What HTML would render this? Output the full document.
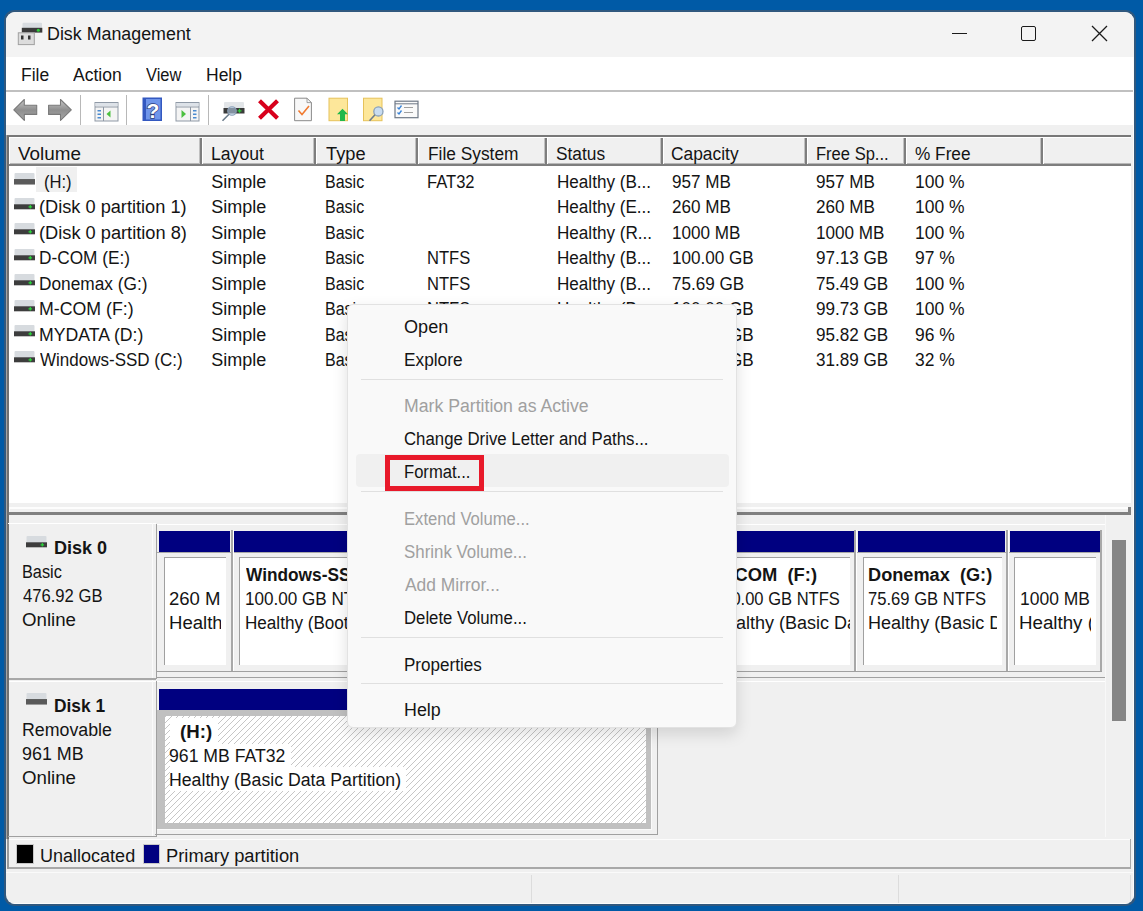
<!DOCTYPE html>
<html><head><meta charset="utf-8"><title>Disk Management</title>
<style>
html,body{margin:0;padding:0;width:1143px;height:911px;overflow:hidden;background:#005aa6;}
body{position:relative;font-family:"Liberation Sans",sans-serif;}
.r{position:absolute;}
.t{position:absolute;white-space:pre;transform-origin:0 0;}
#win{position:absolute;left:0;top:0;width:1143px;height:911px;clip-path:inset(12px 9px 7px 6px round 9px);}
#frame{position:absolute;left:4px;top:10px;width:1132px;height:896px;border-radius:10px;background:#30587e;}
</style></head><body>
<div id="frame"></div>
<div id="win">
<div class="r" style="left:0px;top:0px;width:1143px;height:911px;background:#f0f0f0;"></div>
<div class="r" style="left:0px;top:0px;width:1143px;height:57px;background:#f3f3f3;"></div>
<svg class="r" style="left:17px;top:21px" width="26" height="26" viewBox="0 0 26 26">
<rect x="5.5" y="1.8" width="19.5" height="5.5" rx="1" fill="#d8dce0"/>
<rect x="4.8" y="6.8" width="20.5" height="4.8" fill="#3a3a3a"/>
<circle cx="21.3" cy="9.2" r="1.5" fill="#2fcf3a"/>
<rect x="1.3" y="11.8" width="16" height="11.8" fill="#dcdcdc" stroke="#a0a0a0" stroke-width="1"/>
<rect x="4" y="14.5" width="2.5" height="4" fill="#333"/>
<rect x="11" y="14.5" width="2.5" height="4" fill="#333"/>
</svg>
<div class="t" style="left:47.21px;top:25.26px;font-size:18px;line-height:18px;color:#141414;transform:scaleX(0.9910);">Disk Management</div><div class="r" style="left:952px;top:33px;width:15px;height:1px;background:#1a1a1a;"></div>
<div class="r" style="left:1021px;top:26px;width:15px;height:15px;border:1.3px solid #1a1a1a;border-radius:2px;box-sizing:border-box;"></div>
<svg class="r" style="left:1091px;top:25px" width="17" height="17" viewBox="0 0 17 17"><path d="M1 1L16 16M16 1L1 16" stroke="#1a1a1a" stroke-width="1.3"/></svg>
<div class="r" style="left:0px;top:57px;width:1143px;height:33px;background:#fff;"></div>
<div class="r" style="left:0px;top:90px;width:1143px;height:2px;background:#c0c0c0;"></div>
<div class="t" style="left:21.03px;top:66.16px;font-size:18px;line-height:18px;color:#141414;transform:scaleX(0.9704);">File</div><div class="t" style="left:72.80px;top:66.16px;font-size:18px;line-height:18px;color:#141414;transform:scaleX(0.9735);">Action</div><div class="t" style="left:146.30px;top:66.16px;font-size:18px;line-height:18px;color:#141414;transform:scaleX(0.9154);">View</div><div class="t" style="left:205.83px;top:66.16px;font-size:18px;line-height:18px;color:#141414;transform:scaleX(0.9714);">Help</div><div class="r" style="left:0px;top:92px;width:1143px;height:33px;background:#fff;"></div>
<div class="r" style="left:79.5px;top:95px;width:1px;height:30px;background:#b8b8b8;"></div>
<div class="r" style="left:126px;top:95px;width:1px;height:30px;background:#b8b8b8;"></div>
<div class="r" style="left:207.5px;top:95px;width:1px;height:30px;background:#b8b8b8;"></div>
<svg class="r" style="left:0px;top:92px" width="430" height="33" viewBox="0 92 430 33">
<defs>
<linearGradient id="ag" x1="0" y1="0" x2="0" y2="1"><stop offset="0" stop-color="#c8c8c8"/><stop offset="0.5" stop-color="#8e8e8e"/><stop offset="1" stop-color="#a8a8a8"/></linearGradient>
</defs>
<path d="M13.8 109.8 L24.3 99.5 L24.3 105.2 L36.7 105.2 L36.7 114.4 L24.3 114.4 L24.3 120.4 Z" fill="url(#ag)" stroke="#7a7a7a" stroke-width="1.1" stroke-linejoin="round"/>
<path d="M71.3 109.8 L60.5 99.5 L60.5 105.2 L48.6 105.2 L48.6 114.4 L60.5 114.4 L60.5 120.4 Z" fill="url(#ag)" stroke="#7a7a7a" stroke-width="1.1" stroke-linejoin="round"/>
<!-- console tree -->
<rect x="95" y="102.5" width="23" height="18.5" fill="#f4f4f4" stroke="#8f99a6" stroke-width="1"/>
<rect x="95.5" y="103" width="22" height="3" fill="#dde2e8"/>
<line x1="95" y1="107" x2="118" y2="107" stroke="#8f99a6" stroke-width="1"/>
<line x1="103.5" y1="107" x2="103.5" y2="121" stroke="#8f99a6" stroke-width="1"/>
<rect x="97.5" y="110" width="3.5" height="1.5" fill="#4a8ad0"/>
<rect x="97.5" y="113.5" width="3.5" height="1.5" fill="#4a8ad0"/>
<rect x="97.5" y="117" width="3.5" height="1.5" fill="#4a8ad0"/>
<path d="M106.5 114 L110.5 110.5 L110.5 117.5 Z" fill="#4cc040"/>
<!-- help -->
<rect x="142.5" y="97.5" width="19.5" height="23.5" fill="#3358c0"/>
<rect x="146" y="99" width="14.5" height="20.5" fill="#6f95ea"/>
<text x="152.8" y="118" font-family="Liberation Sans" font-weight="bold" font-size="21" fill="#fff" stroke="#2a3a7a" stroke-width="1.4" paint-order="stroke" text-anchor="middle">?</text>
<!-- action pane -->
<rect x="176" y="102.5" width="23" height="18.5" fill="#f4f4f4" stroke="#8f99a6" stroke-width="1"/>
<rect x="176.5" y="103" width="22" height="3" fill="#dde2e8"/>
<line x1="176" y1="107" x2="199" y2="107" stroke="#8f99a6" stroke-width="1"/>
<line x1="190.5" y1="107" x2="190.5" y2="121" stroke="#8f99a6" stroke-width="1"/>
<rect x="193" y="110" width="3.5" height="1.5" fill="#4a8ad0"/>
<rect x="193" y="113.5" width="3.5" height="1.5" fill="#4a8ad0"/>
<rect x="193" y="117" width="3.5" height="1.5" fill="#4a8ad0"/>
<path d="M186 114 L181.5 110 L181.5 118 Z" fill="#4cc040"/>
<!-- drive + magnifier -->
<rect x="224" y="102" width="20" height="6.5" rx="1" fill="#e2e5e8"/>
<rect x="223.5" y="108" width="21" height="5.5" fill="#3a3a3a"/>
<path d="M237.5 110.8h4M239.5 108.8v4" stroke="#2fd03a" stroke-width="1.3"/>
<circle cx="232" cy="111" r="4.3" fill="rgba(180,205,230,0.6)" stroke="#8aa0b8" stroke-width="1.1"/>
<line x1="229" y1="114.2" x2="222.5" y2="120.8" stroke="#6a7a8a" stroke-width="1.6"/>
<!-- red X -->
<path d="M259.5 100.8 L277.5 118.2 M277.5 100.8 L259.5 118.2" stroke="#d8001c" stroke-width="4.2" stroke-linecap="butt"/>
<!-- doc check -->
<path d="M294.6 98.2 L307 98.2 L311.4 102.6 L311.4 120.7 L294.6 120.7 Z" fill="#f8f8f8" stroke="#8a8a8a" stroke-width="1"/>
<path d="M307 98.2 L307 102.6 L311.4 102.6" fill="none" stroke="#8a8a8a" stroke-width="0.8"/>
<path d="M298.5 110.5 L302 114.5 L309 106" fill="none" stroke="#f07a30" stroke-width="1.6"/>
<!-- yellow doc up -->
<rect x="329" y="98.2" width="18.5" height="22.5" fill="#fde79a" stroke="#e6c25a" stroke-width="1"/>
<path d="M342.5 108.8 L348 114.3 L345 114.3 L345 121 L340 121 L340 114.3 L337 114.3 Z" fill="#22b84a"/>
<!-- yellow doc magnifier -->
<rect x="363.5" y="98.2" width="18.5" height="22.5" fill="#fde79a" stroke="#e6c25a" stroke-width="1"/>
<circle cx="378.4" cy="111.4" r="4.6" fill="#c8dcf0" stroke="#8aa0b8" stroke-width="1.3"/>
<line x1="375" y1="114.8" x2="369.5" y2="120.8" stroke="#6c7c8c" stroke-width="1.6"/>
<!-- checklist -->
<rect x="395" y="101.2" width="23" height="16.5" fill="#fafafa" stroke="#6e7886" stroke-width="1.2"/>
<line x1="395" y1="103.8" x2="418" y2="103.8" stroke="#6e7886" stroke-width="1"/>
<path d="M397.5 107.5 L399 109 L401.5 105.5 M397.5 112.5 L399 114 L401.5 110.5" fill="none" stroke="#3a84d8" stroke-width="1.3"/>
<line x1="404" y1="107.5" x2="413" y2="107.5" stroke="#a0a0a0" stroke-width="1"/>
<line x1="404" y1="112.5" x2="413" y2="112.5" stroke="#a0a0a0" stroke-width="1"/>
</svg>
<div class="r" style="left:6px;top:135px;width:1125px;height:2px;background:#787878;"></div>
<div class="r" style="left:6px;top:135px;width:1px;height:380px;background:#a4a4a4;"></div>
<div class="r" style="left:7px;top:136px;width:2px;height:379px;background:#707070;"></div>
<div class="r" style="left:9px;top:137px;width:1122px;height:366px;background:#fff;"></div>
<div class="r" style="left:9px;top:137px;width:1122px;height:29px;background:#f0f0f0;"></div>
<div class="r" style="left:9px;top:137px;width:1122px;height:1px;background:#fff;"></div>
<div class="r" style="left:9px;top:163px;width:1122px;height:1px;background:#b8b8b8;"></div>
<div class="r" style="left:9px;top:164px;width:1122px;height:2px;background:#7e7e7e;"></div>
<div class="r" style="left:9px;top:137px;width:1px;height:27px;background:#fff;"></div>
<div class="r" style="left:199px;top:138px;width:1px;height:26px;background:#c0c0c0;"></div>
<div class="r" style="left:200px;top:138px;width:2px;height:26px;background:#7e7e7e;"></div>
<div class="r" style="left:202px;top:138px;width:1px;height:26px;background:#fff;"></div>
<div class="r" style="left:313px;top:138px;width:1px;height:26px;background:#c0c0c0;"></div>
<div class="r" style="left:314px;top:138px;width:2px;height:26px;background:#7e7e7e;"></div>
<div class="r" style="left:316px;top:138px;width:1px;height:26px;background:#fff;"></div>
<div class="r" style="left:415px;top:138px;width:1px;height:26px;background:#c0c0c0;"></div>
<div class="r" style="left:416px;top:138px;width:2px;height:26px;background:#7e7e7e;"></div>
<div class="r" style="left:418px;top:138px;width:1px;height:26px;background:#fff;"></div>
<div class="r" style="left:544px;top:138px;width:1px;height:26px;background:#c0c0c0;"></div>
<div class="r" style="left:545px;top:138px;width:2px;height:26px;background:#7e7e7e;"></div>
<div class="r" style="left:547px;top:138px;width:1px;height:26px;background:#fff;"></div>
<div class="r" style="left:660px;top:138px;width:1px;height:26px;background:#c0c0c0;"></div>
<div class="r" style="left:661px;top:138px;width:2px;height:26px;background:#7e7e7e;"></div>
<div class="r" style="left:663px;top:138px;width:1px;height:26px;background:#fff;"></div>
<div class="r" style="left:804px;top:138px;width:1px;height:26px;background:#c0c0c0;"></div>
<div class="r" style="left:805px;top:138px;width:2px;height:26px;background:#7e7e7e;"></div>
<div class="r" style="left:807px;top:138px;width:1px;height:26px;background:#fff;"></div>
<div class="r" style="left:903px;top:138px;width:1px;height:26px;background:#c0c0c0;"></div>
<div class="r" style="left:904px;top:138px;width:2px;height:26px;background:#7e7e7e;"></div>
<div class="r" style="left:906px;top:138px;width:1px;height:26px;background:#fff;"></div>
<div class="r" style="left:1040px;top:138px;width:1px;height:26px;background:#c0c0c0;"></div>
<div class="r" style="left:1041px;top:138px;width:2px;height:26px;background:#7e7e7e;"></div>
<div class="r" style="left:1043px;top:138px;width:1px;height:26px;background:#fff;"></div>
<div class="t" style="left:18.10px;top:145.16px;font-size:18px;line-height:18px;color:#141414;transform:scaleX(1.0475);">Volume</div><div class="t" style="left:211.12px;top:145.16px;font-size:18px;line-height:18px;color:#141414;transform:scaleX(0.9792);">Layout</div><div class="t" style="left:325.80px;top:145.16px;font-size:18px;line-height:18px;color:#141414;transform:scaleX(1.0132);">Type</div><div class="t" style="left:427.54px;top:145.16px;font-size:18px;line-height:18px;color:#141414;transform:scaleX(0.9620);">File System</div><div class="t" style="left:555.74px;top:145.16px;font-size:18px;line-height:18px;color:#141414;transform:scaleX(0.9620);">Status</div><div class="t" style="left:671.23px;top:145.16px;font-size:18px;line-height:18px;color:#141414;transform:scaleX(0.9652);">Capacity</div><div class="t" style="left:815.58px;top:145.16px;font-size:18px;line-height:18px;color:#141414;transform:scaleX(0.9195);">Free Sp...</div><div class="t" style="left:915.04px;top:145.16px;font-size:18px;line-height:18px;color:#141414;transform:scaleX(0.9571);">% Free</div><div class="r" style="left:36px;top:167px;width:41px;height:25px;background:#f0f0f0;"></div>
<svg class="r" style="left:13.5px;top:172.5px" width="21" height="12" viewBox="0 0 21 12"><rect x="0.5" y="0" width="20" height="7" rx="1" fill="#d7dbdf"/><rect x="0" y="6.3" width="21" height="5" fill="#3d3d3d"/><rect x="0" y="6.3" width="21" height="5" fill="#5a5a5a"/></svg>
<div class="t" style="left:44.08px;top:172.96px;font-size:18px;line-height:18px;color:#141414;transform:scaleX(0.9214);">(H:)</div><div class="t" style="left:211.20px;top:172.96px;font-size:18px;line-height:18px;color:#141414;transform:scaleX(1.0000);">Simple</div><div class="t" style="left:325.31px;top:172.96px;font-size:18px;line-height:18px;color:#141414;transform:scaleX(0.8900);">Basic</div><div class="t" style="left:426.88px;top:172.96px;font-size:18px;line-height:18px;color:#141414;transform:scaleX(0.9200);">FAT32</div><div class="t" style="left:556.55px;top:172.96px;font-size:18px;line-height:18px;color:#141414;transform:scaleX(0.9500);">Healthy (B...</div><div class="t" style="left:671.55px;top:172.96px;font-size:18px;line-height:18px;color:#141414;transform:scaleX(0.9500);">957 MB</div><div class="t" style="left:815.55px;top:172.96px;font-size:18px;line-height:18px;color:#141414;transform:scaleX(0.9500);">957 MB</div><div class="t" style="left:914.53px;top:172.96px;font-size:18px;line-height:18px;color:#141414;transform:scaleX(0.9700);">100 %</div><svg class="r" style="left:13.5px;top:197.94px" width="21" height="12" viewBox="0 0 21 12"><rect x="0.5" y="0" width="20" height="7" rx="1" fill="#d7dbdf"/><rect x="0" y="6.3" width="21" height="5" fill="#3d3d3d"/><path d="M14.5 8.8h3.6M16.3 7v3.6" stroke="#2ad43a" stroke-width="1.2"/></svg>
<div class="t" style="left:38.69px;top:198.40px;font-size:18px;line-height:18px;color:#141414;transform:scaleX(1.0104);">(Disk 0 partition 1)</div><div class="t" style="left:211.20px;top:198.40px;font-size:18px;line-height:18px;color:#141414;transform:scaleX(1.0000);">Simple</div><div class="t" style="left:325.31px;top:198.40px;font-size:18px;line-height:18px;color:#141414;transform:scaleX(0.8900);">Basic</div><div class="t" style="left:556.55px;top:198.40px;font-size:18px;line-height:18px;color:#141414;transform:scaleX(0.9500);">Healthy (E...</div><div class="t" style="left:671.55px;top:198.40px;font-size:18px;line-height:18px;color:#141414;transform:scaleX(0.9500);">260 MB</div><div class="t" style="left:815.55px;top:198.40px;font-size:18px;line-height:18px;color:#141414;transform:scaleX(0.9500);">260 MB</div><div class="t" style="left:914.53px;top:198.40px;font-size:18px;line-height:18px;color:#141414;transform:scaleX(0.9700);">100 %</div><svg class="r" style="left:13.5px;top:223.38px" width="21" height="12" viewBox="0 0 21 12"><rect x="0.5" y="0" width="20" height="7" rx="1" fill="#d7dbdf"/><rect x="0" y="6.3" width="21" height="5" fill="#3d3d3d"/><path d="M14.5 8.8h3.6M16.3 7v3.6" stroke="#2ad43a" stroke-width="1.2"/></svg>
<div class="t" style="left:38.69px;top:223.84px;font-size:18px;line-height:18px;color:#141414;transform:scaleX(1.0125);">(Disk 0 partition 8)</div><div class="t" style="left:211.20px;top:223.84px;font-size:18px;line-height:18px;color:#141414;transform:scaleX(1.0000);">Simple</div><div class="t" style="left:325.31px;top:223.84px;font-size:18px;line-height:18px;color:#141414;transform:scaleX(0.8900);">Basic</div><div class="t" style="left:556.55px;top:223.84px;font-size:18px;line-height:18px;color:#141414;transform:scaleX(0.9500);">Healthy (R...</div><div class="t" style="left:671.55px;top:223.84px;font-size:18px;line-height:18px;color:#141414;transform:scaleX(0.9500);">1000 MB</div><div class="t" style="left:815.55px;top:223.84px;font-size:18px;line-height:18px;color:#141414;transform:scaleX(0.9500);">1000 MB</div><div class="t" style="left:914.53px;top:223.84px;font-size:18px;line-height:18px;color:#141414;transform:scaleX(0.9700);">100 %</div><svg class="r" style="left:13.5px;top:248.82px" width="21" height="12" viewBox="0 0 21 12"><rect x="0.5" y="0" width="20" height="7" rx="1" fill="#d7dbdf"/><rect x="0" y="6.3" width="21" height="5" fill="#3d3d3d"/><path d="M14.5 8.8h3.6M16.3 7v3.6" stroke="#2ad43a" stroke-width="1.2"/></svg>
<div class="t" style="left:38.74px;top:249.28px;font-size:18px;line-height:18px;color:#141414;transform:scaleX(0.9581);">D-COM (E:)</div><div class="t" style="left:211.20px;top:249.28px;font-size:18px;line-height:18px;color:#141414;transform:scaleX(1.0000);">Simple</div><div class="t" style="left:325.31px;top:249.28px;font-size:18px;line-height:18px;color:#141414;transform:scaleX(0.8900);">Basic</div><div class="t" style="left:426.88px;top:249.28px;font-size:18px;line-height:18px;color:#141414;transform:scaleX(0.9200);">NTFS</div><div class="t" style="left:556.55px;top:249.28px;font-size:18px;line-height:18px;color:#141414;transform:scaleX(0.9500);">Healthy (B...</div><div class="t" style="left:671.55px;top:249.28px;font-size:18px;line-height:18px;color:#141414;transform:scaleX(0.9500);">100.00 GB</div><div class="t" style="left:815.55px;top:249.28px;font-size:18px;line-height:18px;color:#141414;transform:scaleX(0.9500);">97.13 GB</div><div class="t" style="left:914.53px;top:249.28px;font-size:18px;line-height:18px;color:#141414;transform:scaleX(0.9700);">97 %</div><svg class="r" style="left:13.5px;top:274.26px" width="21" height="12" viewBox="0 0 21 12"><rect x="0.5" y="0" width="20" height="7" rx="1" fill="#d7dbdf"/><rect x="0" y="6.3" width="21" height="5" fill="#3d3d3d"/><path d="M14.5 8.8h3.6M16.3 7v3.6" stroke="#2ad43a" stroke-width="1.2"/></svg>
<div class="t" style="left:38.74px;top:274.72px;font-size:18px;line-height:18px;color:#141414;transform:scaleX(0.9604);">Donemax (G:)</div><div class="t" style="left:211.20px;top:274.72px;font-size:18px;line-height:18px;color:#141414;transform:scaleX(1.0000);">Simple</div><div class="t" style="left:325.31px;top:274.72px;font-size:18px;line-height:18px;color:#141414;transform:scaleX(0.8900);">Basic</div><div class="t" style="left:426.88px;top:274.72px;font-size:18px;line-height:18px;color:#141414;transform:scaleX(0.9200);">NTFS</div><div class="t" style="left:556.55px;top:274.72px;font-size:18px;line-height:18px;color:#141414;transform:scaleX(0.9500);">Healthy (B...</div><div class="t" style="left:671.55px;top:274.72px;font-size:18px;line-height:18px;color:#141414;transform:scaleX(0.9500);">75.69 GB</div><div class="t" style="left:815.55px;top:274.72px;font-size:18px;line-height:18px;color:#141414;transform:scaleX(0.9500);">75.49 GB</div><div class="t" style="left:914.53px;top:274.72px;font-size:18px;line-height:18px;color:#141414;transform:scaleX(0.9700);">100 %</div><svg class="r" style="left:13.5px;top:299.7px" width="21" height="12" viewBox="0 0 21 12"><rect x="0.5" y="0" width="20" height="7" rx="1" fill="#d7dbdf"/><rect x="0" y="6.3" width="21" height="5" fill="#3d3d3d"/><path d="M14.5 8.8h3.6M16.3 7v3.6" stroke="#2ad43a" stroke-width="1.2"/></svg>
<div class="t" style="left:38.71px;top:300.16px;font-size:18px;line-height:18px;color:#141414;transform:scaleX(0.9851);">M-COM (F:)</div><div class="t" style="left:211.20px;top:300.16px;font-size:18px;line-height:18px;color:#141414;transform:scaleX(1.0000);">Simple</div><div class="t" style="left:325.31px;top:300.16px;font-size:18px;line-height:18px;color:#141414;transform:scaleX(0.8900);">Basic</div><div class="t" style="left:426.88px;top:300.16px;font-size:18px;line-height:18px;color:#141414;transform:scaleX(0.9200);">NTFS</div><div class="t" style="left:556.55px;top:300.16px;font-size:18px;line-height:18px;color:#141414;transform:scaleX(0.9500);">Healthy (B...</div><div class="t" style="left:671.55px;top:300.16px;font-size:18px;line-height:18px;color:#141414;transform:scaleX(0.9500);">100.00 GB</div><div class="t" style="left:815.55px;top:300.16px;font-size:18px;line-height:18px;color:#141414;transform:scaleX(0.9500);">99.73 GB</div><div class="t" style="left:914.53px;top:300.16px;font-size:18px;line-height:18px;color:#141414;transform:scaleX(0.9700);">100 %</div><svg class="r" style="left:13.5px;top:325.14px" width="21" height="12" viewBox="0 0 21 12"><rect x="0.5" y="0" width="20" height="7" rx="1" fill="#d7dbdf"/><rect x="0" y="6.3" width="21" height="5" fill="#3d3d3d"/><path d="M14.5 8.8h3.6M16.3 7v3.6" stroke="#2ad43a" stroke-width="1.2"/></svg>
<div class="t" style="left:38.72px;top:325.60px;font-size:18px;line-height:18px;color:#141414;transform:scaleX(0.9817);">MYDATA (D:)</div><div class="t" style="left:211.20px;top:325.60px;font-size:18px;line-height:18px;color:#141414;transform:scaleX(1.0000);">Simple</div><div class="t" style="left:325.31px;top:325.60px;font-size:18px;line-height:18px;color:#141414;transform:scaleX(0.8900);">Basic</div><div class="t" style="left:426.88px;top:325.60px;font-size:18px;line-height:18px;color:#141414;transform:scaleX(0.9200);">NTFS</div><div class="t" style="left:556.55px;top:325.60px;font-size:18px;line-height:18px;color:#141414;transform:scaleX(0.9500);">Healthy (B...</div><div class="t" style="left:671.55px;top:325.60px;font-size:18px;line-height:18px;color:#141414;transform:scaleX(0.9500);">100.00 GB</div><div class="t" style="left:815.55px;top:325.60px;font-size:18px;line-height:18px;color:#141414;transform:scaleX(0.9500);">95.82 GB</div><div class="t" style="left:914.53px;top:325.60px;font-size:18px;line-height:18px;color:#141414;transform:scaleX(0.9700);">96 %</div><svg class="r" style="left:13.5px;top:350.58000000000004px" width="21" height="12" viewBox="0 0 21 12"><rect x="0.5" y="0" width="20" height="7" rx="1" fill="#d7dbdf"/><rect x="0" y="6.3" width="21" height="5" fill="#3d3d3d"/><path d="M14.5 8.8h3.6M16.3 7v3.6" stroke="#2ad43a" stroke-width="1.2"/></svg>
<div class="t" style="left:39.70px;top:351.04px;font-size:18px;line-height:18px;color:#141414;transform:scaleX(0.9447);">Windows-SSD (C:)</div><div class="t" style="left:211.20px;top:351.04px;font-size:18px;line-height:18px;color:#141414;transform:scaleX(1.0000);">Simple</div><div class="t" style="left:325.31px;top:351.04px;font-size:18px;line-height:18px;color:#141414;transform:scaleX(0.8900);">Basic</div><div class="t" style="left:426.88px;top:351.04px;font-size:18px;line-height:18px;color:#141414;transform:scaleX(0.9200);">NTFS</div><div class="t" style="left:556.55px;top:351.04px;font-size:18px;line-height:18px;color:#141414;transform:scaleX(0.9500);">Healthy (B...</div><div class="t" style="left:671.55px;top:351.04px;font-size:18px;line-height:18px;color:#141414;transform:scaleX(0.9500);">100.00 GB</div><div class="t" style="left:815.55px;top:351.04px;font-size:18px;line-height:18px;color:#141414;transform:scaleX(0.9500);">31.89 GB</div><div class="t" style="left:914.53px;top:351.04px;font-size:18px;line-height:18px;color:#141414;transform:scaleX(0.9700);">32 %</div><div class="r" style="left:9px;top:503px;width:1122px;height:4px;background:#f0f0f0;"></div>
<div class="r" style="left:9px;top:507px;width:1122px;height:2px;background:#fdfdfd;"></div>
<div class="r" style="left:9px;top:509px;width:1122px;height:3px;background:#f0f0f0;"></div>
<div class="r" style="left:9px;top:512px;width:1122px;height:3px;background:#808080;"></div>
<div class="r" style="left:9px;top:507px;width:1px;height:5px;background:#fdfdfd;"></div>
<div class="r" style="left:1128px;top:507px;width:3px;height:8px;background:#808080;"></div>
<div class="r" style="left:1131px;top:135px;width:3px;height:380px;background:#f0f0f0;"></div>
<div class="r" style="left:6px;top:515px;width:1px;height:324px;background:#a4a4a4;"></div>
<div class="r" style="left:7px;top:515px;width:2px;height:324px;background:#707070;"></div>
<div class="r" style="left:9px;top:515px;width:1096px;height:322px;background:#f0f0f0;"></div>
<div class="r" style="left:8px;top:523px;width:148px;height:1px;background:#fff;"></div>
<div class="r" style="left:152px;top:523px;width:1px;height:155px;background:#fafafa;"></div>
<div class="r" style="left:156px;top:524px;width:1px;height:155px;background:#a0a0a0;"></div>
<div class="r" style="left:9px;top:678px;width:147px;height:2px;background:#a8a8a8;"></div>
<svg class="r" style="left:25.7px;top:535.5px" width="21" height="12" viewBox="0 0 21 12"><rect x="0.5" y="0" width="20" height="7" rx="1" fill="#d7dbdf"/><rect x="0" y="6.3" width="21" height="5" fill="#3d3d3d"/><path d="M14.5 8.8h3.6M16.3 7v3.6" stroke="#2ad43a" stroke-width="1.2"/></svg>
<div class="t" style="left:53.90px;top:538.96px;font-size:18px;line-height:18px;color:#141414;font-weight:bold;transform:scaleX(1.0020);">Disk 0</div><div class="t" style="left:22.40px;top:563.16px;font-size:18px;line-height:18px;color:#141414;transform:scaleX(0.9047);">Basic</div><div class="t" style="left:23.30px;top:587.26px;font-size:18px;line-height:18px;color:#141414;transform:scaleX(0.9235);">476.92 GB</div><div class="t" style="left:22.26px;top:610.86px;font-size:18px;line-height:18px;color:#141414;transform:scaleX(1.0380);">Online</div><div class="r" style="left:157px;top:524px;width:948px;height:1px;background:#fff;"></div>
<div class="r" style="left:157px;top:677px;width:948px;height:1px;background:#a0a0a0;"></div>
<div class="r" style="left:157px;top:671px;width:945px;height:1px;background:#a0a0a0;"></div>
<div class="r" style="left:157px;top:552px;width:945px;height:1px;background:#a8a8a8;"></div>
<div class="r" style="left:159px;top:531px;width:70.5px;height:21px;background:#000080;"></div>
<div class="r" style="left:234px;top:531px;width:166px;height:21px;background:#000080;"></div>
<div class="r" style="left:700px;top:531px;width:153.5px;height:21px;background:#000080;"></div>
<div class="r" style="left:858px;top:531px;width:147px;height:21px;background:#000080;"></div>
<div class="r" style="left:1009.5px;top:531px;width:90.5px;height:21px;background:#000080;"></div>
<div class="r" style="left:230.5px;top:530px;width:2px;height:141px;background:#a8a8a8;"></div>
<div class="r" style="left:232.5px;top:530px;width:1px;height:141px;background:#fff;"></div>
<div class="r" style="left:854px;top:530px;width:2px;height:141px;background:#a8a8a8;"></div>
<div class="r" style="left:856px;top:530px;width:1px;height:141px;background:#fff;"></div>
<div class="r" style="left:1005.5px;top:530px;width:2px;height:141px;background:#a8a8a8;"></div>
<div class="r" style="left:1007.5px;top:530px;width:1px;height:141px;background:#fff;"></div>
<div class="r" style="left:1100px;top:530px;width:2px;height:141px;background:#a8a8a8;"></div>
<div class="r" style="left:164px;top:557px;width:61.5px;height:108px;background:#fff;border-left:1px solid #a0a0a0;border-top:1px solid #a0a0a0;box-sizing:border-box;"></div>
<div class="r" style="left:238.5px;top:557px;width:111.5px;height:108px;background:#fff;border-left:1px solid #a0a0a0;border-top:1px solid #a0a0a0;box-sizing:border-box;"></div>
<div class="r" style="left:700px;top:557px;width:149.5px;height:108px;background:#fff;border-left:1px solid #a0a0a0;border-top:1px solid #a0a0a0;box-sizing:border-box;"></div>
<div class="r" style="left:862.5px;top:557px;width:139.0px;height:108px;background:#fff;border-left:1px solid #a0a0a0;border-top:1px solid #a0a0a0;box-sizing:border-box;"></div>
<div class="r" style="left:1014px;top:557px;width:82px;height:108px;background:#fff;border-left:1px solid #a0a0a0;border-top:1px solid #a0a0a0;box-sizing:border-box;"></div>
<div class="r" style="left:165px;top:558px;width:56.30000000000001px;height:108px;overflow:hidden;"><div class="r" style="left:-165px;top:-558px;width:1143px;height:911px;"><div class="t" style="left:168.97px;top:590.16px;font-size:18px;line-height:18px;color:#141414;transform:scaleX(1.0300);">260 MB</div><div class="t" style="left:168.97px;top:613.76px;font-size:18px;line-height:18px;color:#141414;transform:scaleX(1.0300);">Healthy (EFI System Partition)</div></div></div>
<div class="r" style="left:239.5px;top:558px;width:110.5px;height:108px;overflow:hidden;"><div class="r" style="left:-239.5px;top:-558px;width:1143px;height:911px;"><div class="t" style="left:245.50px;top:566.26px;font-size:18px;line-height:18px;color:#141414;font-weight:bold;transform:scaleX(0.9600);">Windows-SSD  (C:)</div><div class="t" style="left:244.55px;top:590.16px;font-size:18px;line-height:18px;color:#141414;transform:scaleX(0.9500);">100.00 GB NTFS</div><div class="t" style="left:244.55px;top:613.76px;font-size:18px;line-height:18px;color:#141414;transform:scaleX(0.9500);">Healthy (Boot, Page File, Crash Dump, Basic Data Partition)</div></div></div>
<div class="r" style="left:736px;top:558px;width:113.5px;height:108px;overflow:hidden;"><div class="r" style="left:-736px;top:-558px;width:1143px;height:911px;"><div class="t" style="left:712.98px;top:566.26px;font-size:18px;line-height:18px;color:#141414;font-weight:bold;transform:scaleX(1.0200);">M-COM  (F:)</div><div class="t" style="left:713.08px;top:590.16px;font-size:18px;line-height:18px;color:#141414;transform:scaleX(0.9184);">100.00 GB NTFS</div><div class="t" style="left:713.00px;top:613.76px;font-size:18px;line-height:18px;color:#141414;transform:scaleX(1.0000);">Healthy (Basic Data Partition)</div></div></div>
<div class="r" style="left:863.5px;top:558px;width:133.5px;height:108px;overflow:hidden;"><div class="r" style="left:-863.5px;top:-558px;width:1143px;height:911px;"><div class="t" style="left:868.09px;top:566.26px;font-size:18px;line-height:18px;color:#141414;font-weight:bold;transform:scaleX(1.0099);">Donemax  (G:)</div><div class="t" style="left:868.18px;top:590.16px;font-size:18px;line-height:18px;color:#141414;transform:scaleX(0.9230);">75.69 GB NTFS</div><div class="t" style="left:868.10px;top:613.76px;font-size:18px;line-height:18px;color:#141414;transform:scaleX(1.0000);">Healthy (Basic Data Partition)</div></div></div>
<div class="r" style="left:1015px;top:558px;width:76px;height:108px;overflow:hidden;"><div class="r" style="left:-1015px;top:-558px;width:1143px;height:911px;"><div class="t" style="left:1019.53px;top:590.16px;font-size:18px;line-height:18px;color:#141414;transform:scaleX(0.9700);">1000 MB</div><div class="t" style="left:1019.46px;top:613.76px;font-size:18px;line-height:18px;color:#141414;transform:scaleX(1.0400);">Healthy (Recovery Partition)</div></div></div>
<div class="r" style="left:9px;top:681px;width:147px;height:1px;background:#fff;"></div>
<div class="r" style="left:152px;top:680px;width:1px;height:157px;background:#fafafa;"></div>
<div class="r" style="left:156px;top:681px;width:1px;height:156px;background:#a0a0a0;"></div>
<div class="r" style="left:8px;top:836px;width:148px;height:1px;background:#a0a0a0;"></div>
<svg class="r" style="left:25.7px;top:692.8px" width="21" height="12" viewBox="0 0 21 12"><rect x="0.5" y="0" width="20" height="7" rx="1" fill="#d7dbdf"/><rect x="0" y="6.3" width="21" height="5" fill="#3d3d3d"/><rect x="0" y="6.3" width="21" height="5" fill="#5a5a5a"/></svg>
<div class="t" style="left:54.04px;top:696.96px;font-size:18px;line-height:18px;color:#141414;font-weight:bold;transform:scaleX(0.9640);">Disk 1</div><div class="t" style="left:22.31px;top:720.86px;font-size:18px;line-height:18px;color:#141414;transform:scaleX(0.9876);">Removable</div><div class="t" style="left:22.30px;top:745.46px;font-size:18px;line-height:18px;color:#141414;transform:scaleX(0.9950);">961 MB</div><div class="t" style="left:22.26px;top:769.06px;font-size:18px;line-height:18px;color:#141414;transform:scaleX(1.0380);">Online</div><div class="r" style="left:157px;top:681px;width:948px;height:1px;background:#fff;"></div>
<div class="r" style="left:159px;top:689px;width:492px;height:21px;background:#000080;"></div>
<div class="r" style="left:155px;top:710px;width:503px;height:125px;border-right:1px solid #a0a0a0;border-bottom:1px solid #a0a0a0;box-sizing:border-box;"></div>
<div class="r" style="left:157px;top:710px;width:494px;height:119px;background:#c0c0c0;"></div>
<div class="r" style="left:157px;top:829px;width:495px;height:1px;background:#fafafa;"></div>
<div class="r" style="left:651px;top:710px;width:1px;height:120px;background:#fafafa;"></div>
<div class="r" style="left:164.5px;top:715.5px;width:481px;height:107.5px;background-color:#fff;background-image:repeating-linear-gradient(-45deg, #fff 0px, #fff 3.1px, #c6c6c6 3.1px, #c6c6c6 4.24px);"></div>
<div class="r" style="left:169.5px;top:718px;width:48.8px;height:26px;background:#fff;"></div>
<div class="r" style="left:169.5px;top:744px;width:121.9px;height:22.6px;background:#fff;"></div>
<div class="r" style="left:169.5px;top:766.6px;width:236.5px;height:24.4px;background:#fff;"></div>
<div class="t" style="left:179.86px;top:723.26px;font-size:18px;line-height:18px;color:#141414;font-weight:bold;transform:scaleX(1.0379);">(H:)</div><div class="t" style="left:169.02px;top:747.36px;font-size:18px;line-height:18px;color:#141414;transform:scaleX(0.9803);">961 MB FAT32</div><div class="t" style="left:169.02px;top:770.96px;font-size:18px;line-height:18px;color:#141414;transform:scaleX(0.9829);">Healthy (Basic Data Partition)</div><div class="r" style="left:1105px;top:515px;width:26px;height:322px;background:#f0f0f0;"></div>
<div class="r" style="left:1105px;top:515px;width:1px;height:322px;background:#f8f8f8;"></div>
<div class="r" style="left:1112px;top:540px;width:14px;height:181px;background:#858585;"></div>
<div class="r" style="left:1131px;top:515px;width:3px;height:322px;background:#f0f0f0;"></div>
<div class="r" style="left:8px;top:839px;width:1123px;height:1px;background:#fcfcfc;"></div>
<div class="r" style="left:7px;top:839px;width:2px;height:30px;background:#9a9a9a;"></div>
<div class="r" style="left:9px;top:867px;width:1122px;height:2px;background:#a8a8a8;"></div>
<div class="r" style="left:1130px;top:839px;width:1px;height:30px;background:#a8a8a8;"></div>
<div class="r" style="left:17px;top:844.5px;width:16px;height:18.5px;background:#000;box-shadow:0 0 0 1px #c8c8c8;"></div>
<div class="t" style="left:40.00px;top:846.76px;font-size:18px;line-height:18px;color:#141414;transform:scaleX(1.0011);">Unallocated</div><div class="r" style="left:143.5px;top:844.5px;width:15.5px;height:18.5px;background:#000080;box-shadow:0 0 0 1px #c8c8c8;"></div>
<div class="t" style="left:166.18px;top:846.76px;font-size:18px;line-height:18px;color:#141414;transform:scaleX(1.0171);">Primary partition</div><div class="r" style="left:6px;top:872px;width:1128px;height:1px;background:#fafafa;"></div>
<div class="r" style="left:531px;top:875px;width:1px;height:28px;background:#dcdcdc;"></div>
<div class="r" style="left:898px;top:875px;width:1px;height:28px;background:#dcdcdc;"></div>
<div class="r" style="left:1130px;top:875px;width:1px;height:28px;background:#dcdcdc;"></div>
<div class="r" style="left:1133px;top:57px;width:1px;height:847px;background:#fbfbfb;"></div>
<div class="r" style="left:6px;top:903px;width:1128px;height:1px;background:#fbfbfb;"></div>
<div class="r" style="left:347px;top:304px;width:390px;height:424px;background:#f9f9f9;border:1.5px solid #e2e2e2;border-radius:6px;box-sizing:border-box;box-shadow:0 6px 16px rgba(0,0,0,0.13);"></div>
<div class="r" style="left:355.5px;top:453.5px;width:373px;height:33px;background:#f0f0f0;border-radius:4px;"></div>
<div class="r" style="left:361px;top:379px;width:362px;height:1px;background:#e0e0e0;"></div>
<div class="r" style="left:361px;top:491px;width:362px;height:1px;background:#e0e0e0;"></div>
<div class="r" style="left:361px;top:637px;width:362px;height:1px;background:#e0e0e0;"></div>
<div class="r" style="left:361px;top:683px;width:362px;height:1px;background:#e0e0e0;"></div>
<div class="t" style="left:403.50px;top:317.76px;font-size:18px;line-height:18px;color:#141414;transform:scaleX(1.0048);">Open</div><div class="t" style="left:403.54px;top:350.66px;font-size:18px;line-height:18px;color:#141414;transform:scaleX(0.9593);">Explore</div><div class="t" style="left:403.52px;top:397.46px;font-size:18px;line-height:18px;color:#a0a0a0;transform:scaleX(0.9812);">Mark Partition as Active</div><div class="t" style="left:403.57px;top:430.46px;font-size:18px;line-height:18px;color:#141414;transform:scaleX(0.9327);">Change Drive Letter and Paths...</div><div class="t" style="left:403.58px;top:463.46px;font-size:18px;line-height:18px;color:#141414;transform:scaleX(0.9214);">Format...</div><div class="t" style="left:403.58px;top:509.56px;font-size:18px;line-height:18px;color:#a0a0a0;transform:scaleX(0.9239);">Extend Volume...</div><div class="t" style="left:403.56px;top:542.96px;font-size:18px;line-height:18px;color:#a0a0a0;transform:scaleX(0.9372);">Shrink Volume...</div><div class="t" style="left:404.50px;top:576.06px;font-size:18px;line-height:18px;color:#a0a0a0;transform:scaleX(0.9680);">Add Mirror...</div><div class="t" style="left:403.57px;top:609.06px;font-size:18px;line-height:18px;color:#141414;transform:scaleX(0.9300);">Delete Volume...</div><div class="t" style="left:403.55px;top:655.66px;font-size:18px;line-height:18px;color:#141414;transform:scaleX(0.9469);">Properties</div><div class="t" style="left:403.51px;top:701.46px;font-size:18px;line-height:18px;color:#141414;transform:scaleX(0.9914);">Help</div><div class="r" style="left:385px;top:455px;width:99px;height:36px;border:5px solid #e8192a;box-sizing:border-box;"></div>
</div>
</body></html>
